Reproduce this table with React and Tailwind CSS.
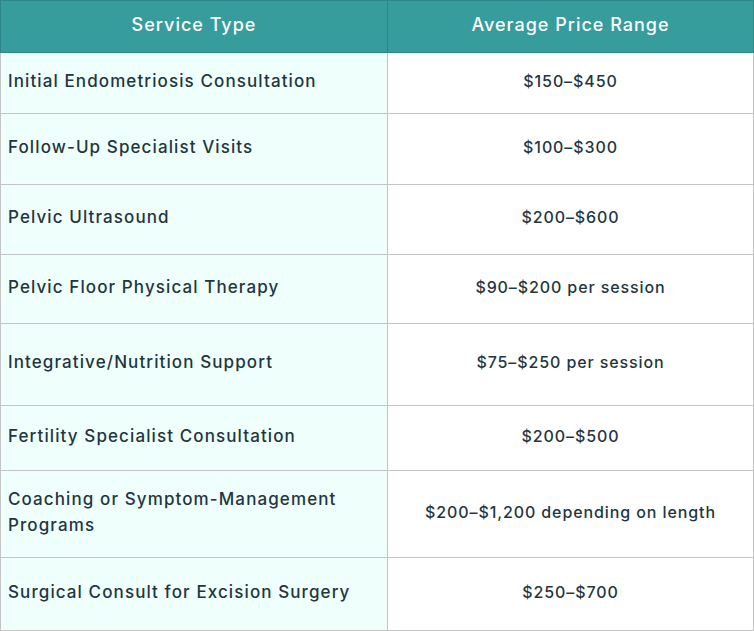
const rows = [
  { service: 'Initial Endometriosis Consultation', price: '$150–$450', h: 'h-[61px]' },
  { service: 'Follow-Up Specialist Visits', price: '$100–$300', h: 'h-[71px]' },
  { service: 'Pelvic Ultrasound', price: '$200–$600', h: 'h-[70px]' },
  { service: 'Pelvic Floor Physical Therapy', price: '$90–$200 per session', h: 'h-[69px]' },
  { service: 'Integrative/Nutrition Support', price: '$75–$250 per session', h: 'h-[82px]' },
  { service: 'Fertility Specialist Consultation', price: '$200–$500', h: 'h-[65px]' },
  { service: 'Coaching or Symptom-Management Programs', price: '$200–$1,200 depending on length', h: 'h-[87px]' },
  { service: 'Surgical Consult for Excision Surgery', price: '$250–$700', h: 'h-[73px]' },
];

export default function App() {
  return (
    <div className="w-[754px] h-[631px] bg-white font-['Inter',sans-serif]">
      <table className="w-full border-collapse table-fixed">
        <colgroup>
          <col className="w-[387px]" />
          <col />
        </colgroup>
        <thead>
          <tr className="h-[52px] bg-[#369c9c] text-white">
            <th className="border border-[#2e8686] pb-[4px] text-[18px] font-medium tracking-[1px] text-center">Service Type</th>
            <th className="border border-[#2e8686] pb-[4px] text-[18px] font-medium tracking-[1px] text-center">Average Price Range</th>
          </tr>
        </thead>
        <tbody className="text-[#1f3640]">
          {rows.map((r) => (
            <tr key={r.service} className={r.h}>
              <td className="border border-[#c4c4c4] bg-[#effffb] pl-[7px] pr-2 pb-[5px] text-[17px] font-medium tracking-[1.1px] leading-[26px] text-left">
                {r.service}
              </td>
              <td className="border border-[#c4c4c4] px-2 pb-[5px] text-[16px] font-medium tracking-[0.9px] text-center">
                {r.price}
              </td>
            </tr>
          ))}
        </tbody>
      </table>
    </div>
  );
}
